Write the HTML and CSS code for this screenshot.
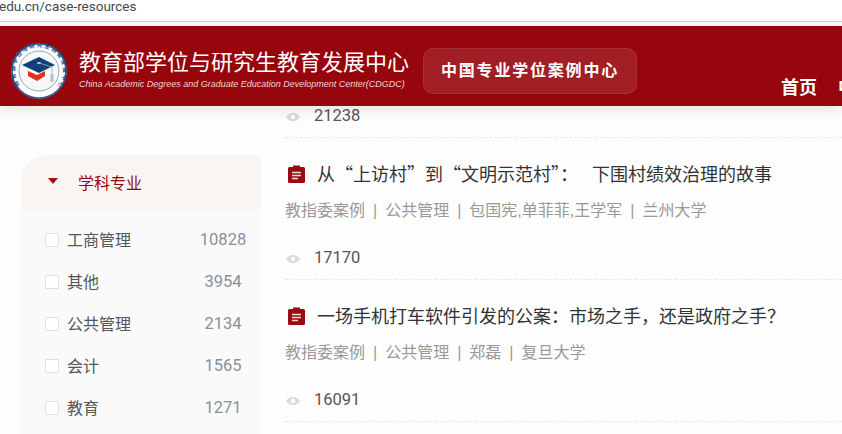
FILE: index.html
```
<!DOCTYPE html>
<html lang="en">
<head>
    <meta charset="UTF-8">
    <meta name="viewport" content="width=device-width, initial-scale=1.0">
    <title>案例资源</title>
    <link rel="stylesheet" href="styles.css">
</head>
<body>
    <!-- Browser address bar -->
    <div class="urlbar">edu.cn/case-resources</div>

    <!-- Site header -->
    <header class="header">
        <svg class="logo" width="56" height="56" viewBox="0 0 56 56">
            <defs>
                <path id="ringText" d="M8.5 42 A24 24 0 1 1 47.5 42"></path>
            </defs>
            <circle cx="28" cy="28" r="27.5" fill="#fff"></circle>
            <circle cx="28" cy="28" r="27" fill="none" stroke="#2a5d94" stroke-width="1.6"></circle>
            <circle cx="28" cy="28" r="20" fill="#f5f7f9" stroke="#8fa9c2" stroke-width="1"></circle>
            <text class="logo-ring"><textPath href="#ringText" textLength="106" lengthAdjust="spacing">教育部学位与研究生教育发展中心</textPath></text>
            <path d="M17 28 L26 32 L34 28 L34 33 L26 38 L17 33 Z" fill="#e0301e"></path>
            <path d="M11 22 L28 14 L44 22 L28 30 Z" fill="#123f7a"></path>
            <ellipse cx="28" cy="20" rx="2" ry="1" fill="#cfd9e4"></ellipse>
            <path d="M28 20 L41 24 L41 32" fill="none" stroke="#9fb3c6" stroke-width="0.8"></path>
            <rect x="39.5" y="31" width="3" height="8" fill="#b3c2d0"></rect>
        </svg>
        <div class="brand">
            <div class="brand-name">教育部学位与研究生教育发展中心</div>
            <div class="brand-en">China Academic Degrees and Graduate Education Development Center(CDGDC)</div>
        </div>
        <div class="badge">中国专业学位案例中心</div>
        <nav class="nav">
            <a>首页</a>
            <a>中心简介</a>
        </nav>
    </header>

    <div class="main">
        <!-- Filter sidebar -->
        <aside class="sidebar">
            <div class="side-head">
                <span class="caret"></span>
                <span class="side-title">学科专业</span>
            </div>
            <ul class="side-list">
                <li class="side-item"><span class="check"></span><span class="side-name">工商管理</span><span class="side-count">10828</span></li>
                <li class="side-item"><span class="check"></span><span class="side-name">其他</span><span class="side-count">3954</span></li>
                <li class="side-item"><span class="check"></span><span class="side-name">公共管理</span><span class="side-count">2134</span></li>
                <li class="side-item"><span class="check"></span><span class="side-name">会计</span><span class="side-count">1565</span></li>
                <li class="side-item"><span class="check"></span><span class="side-name">教育</span><span class="side-count">1271</span></li>
            </ul>
        </aside>

        <!-- Case list -->
        <section class="cases">
            <div class="views views-first">
                <svg class="eye" width="14" height="10" viewBox="0 0 14 10"><path d="M0 5 C3 -0.5 11 -0.5 14 5 C11 10.5 3 10.5 0 5 Z M7 2.8 A2.2 2.2 0 1 0 7 7.2 A2.2 2.2 0 1 0 7 2.8 Z" fill="#d9dbde" fill-rule="evenodd"></path></svg>
                <span>21238</span>
            </div>

            <article class="case">
                <h3 class="case-title">
                    <svg class="clip" width="17" height="18" viewBox="0 0 17 18"><path d="M1.5 2 H5 V0.5 H12 V2 H15.5 Q17 2 17 3.5 V16.5 Q17 18 15.5 18 H1.5 Q0 18 0 16.5 V3.5 Q0 2 1.5 2 Z" fill="#9b0a12"></path><path d="M4 7.5 H13 M4 10.5 H13 M4 13.5 H10" stroke="#f3d9da" stroke-width="1.3"></path></svg>
                    <span class="case-name">从“上访村”到“文明示范村”： 下围村绩效治理的故事</span>
                </h3>
                <p class="case-meta">教指委案例<span class="sep">|</span>公共管理<span class="sep">|</span>包国宪,单菲菲,王学军<span class="sep">|</span>兰州大学</p>
                <div class="views">
                    <svg class="eye" width="14" height="10" viewBox="0 0 14 10"><path d="M0 5 C3 -0.5 11 -0.5 14 5 C11 10.5 3 10.5 0 5 Z M7 2.8 A2.2 2.2 0 1 0 7 7.2 A2.2 2.2 0 1 0 7 2.8 Z" fill="#d9dbde" fill-rule="evenodd"></path></svg>
                    <span>17170</span>
                </div>
            </article>

            <article class="case">
                <h3 class="case-title">
                    <svg class="clip" width="17" height="18" viewBox="0 0 17 18"><path d="M1.5 2 H5 V0.5 H12 V2 H15.5 Q17 2 17 3.5 V16.5 Q17 18 15.5 18 H1.5 Q0 18 0 16.5 V3.5 Q0 2 1.5 2 Z" fill="#9b0a12"></path><path d="M4 7.5 H13 M4 10.5 H13 M4 13.5 H10" stroke="#f3d9da" stroke-width="1.3"></path></svg>
                    <span class="case-name">一场手机打车软件引发的公案：市场之手，还是政府之手？</span>
                </h3>
                <p class="case-meta">教指委案例<span class="sep">|</span>公共管理<span class="sep">|</span>郑磊<span class="sep">|</span>复旦大学</p>
                <div class="views">
                    <svg class="eye" width="14" height="10" viewBox="0 0 14 10"><path d="M0 5 C3 -0.5 11 -0.5 14 5 C11 10.5 3 10.5 0 5 Z M7 2.8 A2.2 2.2 0 1 0 7 7.2 A2.2 2.2 0 1 0 7 2.8 Z" fill="#d9dbde" fill-rule="evenodd"></path></svg>
                    <span>16091</span>
                </div>
            </article>
        </section>
    </div>
</body>
</html>
```

FILE: styles.css
```
body {
    margin: 0;
    height: 434px;
    overflow: hidden;
    font-family: "Liberation Sans", "Noto Sans CJK SC", sans-serif;
    background-color: #fefdfd;
    color: #333;
}
.urlbar {
    height: 21px;
    line-height: 13px;
    margin-left: -1px;
    margin-bottom: 4px;
    font-family: Roboto, "Noto Sans", sans-serif;
    font-size: 13.5px;
    color: #45494e;
    background-color: #fff;
    border-bottom: 1px solid #cfcfcf;
}
.header {
    position: relative;
    z-index: 2;
    display: flex;
    height: 80px;
    padding-left: 11px;
    background-color: #97050d;
    box-shadow: 0 4px 14px rgba(0, 0, 0, 0.1);
    color: #fff;
    white-space: nowrap;
    overflow: hidden;
}
.logo {
    flex: none;
    margin-top: 17px;
}
.logo-ring {
    font-size: 5.6px;
    fill: #1f4f86;
    font-weight: bold;
}
.brand {
    flex: none;
    width: 330px;
    margin-left: 12px;
    padding-top: 23px;
}
.brand-name {
    font-size: 22px;
    line-height: 28px;
}
.brand-en {
    margin-top: 1px;
    font-size: 9px;
    line-height: 12px;
    font-style: italic;
    color: #f0d4d4;
}
.badge {
    flex: none;
    width: 212px;
    height: 44px;
    margin: 22px 0 0 14px;
    border: 1px solid rgba(255, 255, 255, 0.08);
    border-radius: 10px;
    background-color: rgba(255, 255, 255, 0.1);
    text-align: center;
    font-size: 16px;
    font-weight: bold;
    line-height: 44px;
    letter-spacing: 1.8px;
}
.nav {
    display: flex;
    gap: 21px;
    margin-left: 144px;
    padding-top: 50px;
    font-size: 18px;
    font-weight: bold;
    line-height: 24px;
}
.main {
    display: flex;
    align-items: flex-start;
}
.sidebar {
    flex: none;
    width: 240px;
    margin: 49px 0 0 21px;
    border-top-left-radius: 26px;
    background-color: #fafafb;
}
.side-head {
    display: flex;
    align-items: center;
    height: 55px;
    padding-left: 27px;
    border-top-left-radius: 26px;
    background-color: #f8f5f3;
}
.caret {
    width: 0;
    height: 0;
    margin-top: -3px;
    border-top: 6px solid #a30d14;
    border-left: 5px solid transparent;
    border-right: 5px solid transparent;
}
.side-title {
    margin-left: 20px;
    padding-bottom: 2px;
    font-size: 16px;
    color: #97050d;
}
.side-list {
    list-style: none;
    margin: 0;
    padding: 9px 0 5px 24px;
}
.side-item {
    display: flex;
    align-items: center;
    height: 42px;
}
.check {
    flex: none;
    width: 12px;
    height: 12px;
    border: 1px solid #dcdfe6;
    border-radius: 2px;
    background-color: #fff;
}
.side-name {
    margin-left: 8px;
    padding-bottom: 2px;
    font-size: 16px;
    color: #555;
}
.side-count {
    width: 76px;
    margin-left: auto;
    padding-bottom: 2px;
    text-align: center;
    font-family: Roboto, sans-serif;
    font-size: 16.5px;
    color: #8a8f99;
}
.cases {
    flex: 1;
    min-width: 0;
    padding-left: 24px;
    white-space: nowrap;
}
.views {
    display: flex;
    align-items: center;
    height: 22px;
    font-family: Roboto, sans-serif;
    font-size: 16.5px;
    color: #555;
}
.views span {
    margin-left: 14px;
}
.eye {
    flex: none;
    margin-left: 1px;
    margin-top: 4px;
}
.views-first {
    box-sizing: border-box;
    height: 32px;
    padding-bottom: 13px;
    border-bottom: 1px dashed #e8e8e8;
}
.case {
    box-sizing: border-box;
    height: 142px;
    padding-top: 24px;
    border-bottom: 1px dashed #e8e8e8;
}
.case-title {
    display: flex;
    align-items: center;
    gap: 12px;
    height: 24px;
    margin: 0 0 0 3px;
    font-family: "Noto Sans CJK SC", sans-serif;
    font-size: 18px;
    font-weight: normal;
    line-height: 24px;
    word-spacing: 10px;
    color: #333;
}
.case-name {
    padding-bottom: 2px;
}
.clip {
    flex: none;
}
.case-meta {
    margin: 14px 0 0;
    font-size: 16px;
    line-height: 22px;
    color: #999;
}
.sep {
    margin: 0 8px;
}
.case .views {
    margin-top: 24px;
}
```
